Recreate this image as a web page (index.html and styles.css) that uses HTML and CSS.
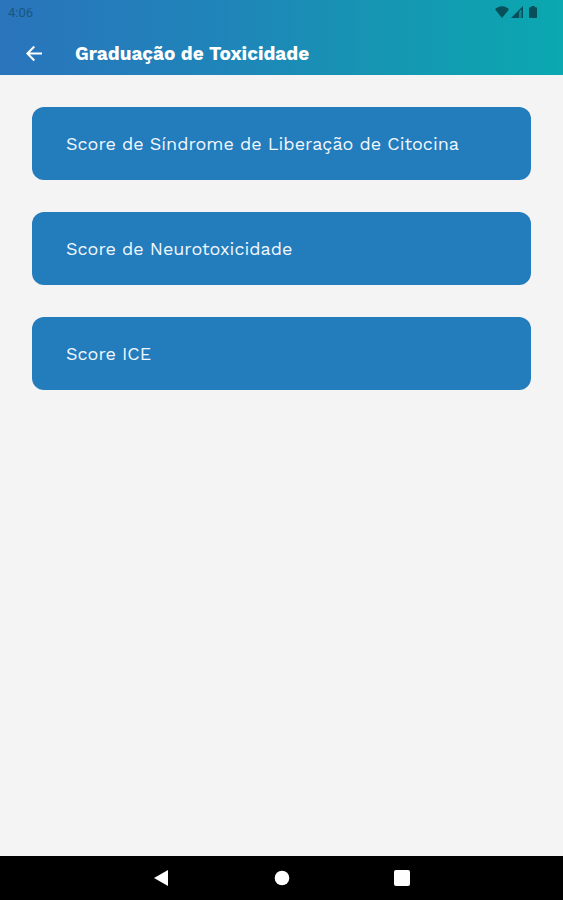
FILE: index.html
```html
<!DOCTYPE html>
<html lang="pt-BR">
<head>
    <meta charset="UTF-8">
    <meta name="viewport" content="width=device-width, initial-scale=1.0">
    <title>Graduação de Toxicidade</title>
    <link rel="stylesheet" href="styles.css">
</head>
<body>
    <header class="header">
        <div class="status-bar">
            <span>4:06</span>
            <div class="status-icons">
                <svg width="14" height="12" viewBox="0 0 14 12"><path d="M7 12L.5 4Q0 3 1 2.300Q7-1.700 13 2.300Q14 3 13.500 4z"/></svg>
                <svg width="12" height="12" viewBox="0 0 12 12"><path d="M0 12L12 0v12h-1.500V3.600L8 6.200V12z"/><path d="M8 6h3v6H8z" opacity=".3"/></svg>
                <svg class="battery" width="8" height="12" viewBox="0 0 8 12"><path d="M2.300 0h3.400v1.300H7q1 0 1 1V11q0 1-1 1H1q-1 0-1-1V2.300q0-1 1-1h1.300z"/></svg>
            </div>
        </div>
        <div class="toolbar">
            <button class="icon-button" type="button" aria-label="Voltar">
                <svg width="16" height="16" viewBox="0 0 16 16" fill="none" stroke="currentColor" stroke-width="2"><path d="M16 7.500H2M8.300.5L1.400 7.500l6.900 7"/></svg>
            </button>
            <h1 class="title">Graduação de Toxicidade</h1>
        </div>
    </header>

    <main class="scores">
        <button class="score" type="button">Score de Síndrome de Liberação de Citocina</button>
        <button class="score" type="button">Score de Neurotoxicidade</button>
        <button class="score" type="button">Score ICE</button>
    </main>

    <nav class="nav-bar">
        <button class="icon-button" type="button" aria-label="Voltar">
            <svg width="16" height="16" viewBox="0 0 16 16" fill="currentColor"><path d="M14 0v16L0 8z"/></svg>
        </button>
        <button class="icon-button" type="button" aria-label="Início">
            <svg width="16" height="16" viewBox="0 0 16 16" fill="currentColor"><circle cx="8" cy="8" r="7.300"/></svg>
        </button>
        <button class="icon-button" type="button" aria-label="Recentes">
            <svg width="16" height="16" viewBox="0 0 16 16" fill="currentColor"><rect width="16" height="16" rx="2"/></svg>
        </button>
    </nav>
</body>
</html>
```
FILE: styles.css
```css
* {
    box-sizing: border-box;
    margin: 0;
    padding: 0;
}

body {
    display: flex;
    flex-direction: column;
    min-height: 100vh;
    background-color: #f4f4f4;
    font-family: "Work Sans", Inter, sans-serif;
}

button {
    border: none;
    font-family: inherit;
    cursor: pointer;
}

svg {
    display: block;
}

.header {
    background: linear-gradient(to right, #2a74bc, #1f85b9 40%, #1794b3 65%, #0aa8b0);
    color: white;
}

.status-bar {
    display: flex;
    justify-content: space-between;
    align-items: center;
    height: 24px;
    padding: 0 26px 0 8px;
    color: #17577f;
    font-family: Roboto, sans-serif;
    font-size: 13px;
}

.status-icons {
    display: flex;
    gap: 2px;
    fill: #07505a;
}

.battery {
    margin-left: 4px;
}

.toolbar {
    display: flex;
    align-items: center;
    gap: 25px;
    height: 51px;
    padding: 8px 18px 0;
}

.icon-button {
    display: flex;
    justify-content: center;
    align-items: center;
    width: 32px;
    height: 32px;
    background: none;
    color: white;
}

.title {
    font-size: 19px;
    font-weight: 700;
}

.scores {
    flex: 1;
    display: flex;
    flex-direction: column;
    gap: 32px;
    padding: 32px;
}

.score {
    min-height: 73px;
    padding: 16px 34px;
    border-radius: 12px;
    background-color: #237cbc;
    color: #f0f7ff;
    font-size: 18px;
    text-align: left;
}

.nav-bar {
    display: flex;
    justify-content: center;
    align-items: center;
    gap: 88px;
    height: 44px;
    background-color: black;
}
```
